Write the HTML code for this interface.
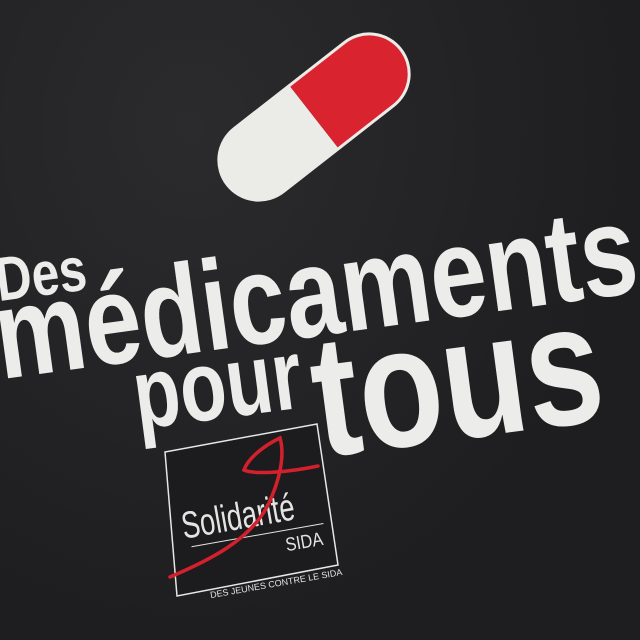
<!DOCTYPE html>
<html><head><meta charset="utf-8"><style>
html,body{margin:0;padding:0}
body{width:640px;height:640px;overflow:hidden;background:#232325;position:relative;font-family:"Liberation Sans",sans-serif}
.t{position:absolute;color:#ececea;font-weight:bold;white-space:nowrap;transform-origin:0 100%;line-height:1}
</style></head><body>
<div style="position:absolute;inset:0;background:radial-gradient(ellipse at 30% 20%,#2b2b2d,#1e1e20 70%)"></div>
<svg width="640" height="640" style="position:absolute;left:0;top:0">
 <g transform="translate(314,117) rotate(-38)">
  <clipPath id="c"><rect x="-110" y="-40" width="220" height="80" rx="40"/></clipPath>
  <g clip-path="url(#c)">
   <rect x="-110" y="-40" width="110" height="80" fill="#ebebe8"/>
   <rect x="0" y="-40" width="110" height="80" fill="#d9232e"/>
  </g>
  <rect x="-110" y="-40" width="220" height="80" rx="40" fill="none" stroke="#ebebe8" stroke-width="3"/>
 </g>
</svg>
<div class="t" style="left:0px;top:250px;font-size:62px;transform:rotate(-7.5deg) scaleX(0.8)">Des</div>
<div class="t" style="left:4px;top:272px;font-size:128px;transform:rotate(-7.8deg) scaleX(0.79)">médicaments</div>
<div class="t" style="left:140px;top:345px;font-size:100px;transform:rotate(-7.5deg) scaleX(0.76)">pour</div>
<div class="t" style="left:324px;top:312px;font-size:172px;transform:rotate(-7.5deg) scaleX(0.8)">tous</div>
<svg width="640" height="640" style="position:absolute;left:0;top:0">
 <polygon points="165,452 317,424 338,565 177,596" fill="#1c1c1e" stroke="#e6e6e4" stroke-width="1.5"/>
 <g transform="rotate(-10 250 510)" font-family="Liberation Sans,sans-serif" fill="#e4e4e2">
  <text x="180" y="527" font-size="38" transform="translate(180 0) scale(0.72 1) translate(-180 0)">Solidarité</text>
  <line x1="186" y1="536" x2="320" y2="536" stroke="#e4e4e2" stroke-width="1"/>
  <text x="279" y="557" font-size="19" transform="translate(279 0) scale(0.85 1) translate(-279 0)">SIDA</text>
  <text x="196" y="590" font-size="9">DES JEUNES CONTRE LE SIDA</text>
 </g>
 <path d="M170,577 C210,560 250,540 268,505 C280,480 285,455 280,438 C265,445 248,458 244,470 C255,475 290,472 318,466" fill="none" stroke="#d4202c" stroke-width="3.5" stroke-linecap="round"/>
</svg>
</body></html>
